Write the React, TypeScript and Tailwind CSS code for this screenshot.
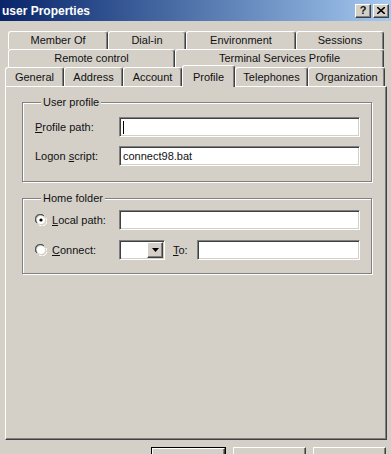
import React from 'react'

const raised =
    'border border-t-white border-l-white border-r-[#404040] border-b-[#404040] shadow-[inset_-1px_-1px_#808080]'
const sunken =
    'border border-t-[#808080] border-l-[#808080] border-r-white border-b-white shadow-[inset_1px_1px_#404040,inset_-1px_-1px_#d4d0c8] bg-white'
const tabBase =
    'flex items-center justify-center border-t border-l border-r border-t-white border-l-white border-r-[#404040] rounded-t-[3px] shadow-[inset_-1px_0_#808080]'

function Tab({ label, w }: { label: string; w: string }) {
    return <div className={`${tabBase} ${w} h-full`}>{label}</div>
}

function Radio({ checked }: { checked?: boolean }) {
    return (
        <svg width="12" height="12" viewBox="0 0 12 12" className="shrink-0">
            <path d="M1 8A5 5 0 0 1 8 1" stroke="#808080" fill="none" strokeWidth="1" />
            <path d="M2 9A4 4 0 0 1 9 2" stroke="#404040" fill="none" strokeWidth="1" />
            <circle cx="6" cy="6" r="4" fill="white" />
            <path d="M11 4A5 5 0 0 1 4 11" stroke="white" fill="none" strokeWidth="1" />
            {checked && <circle cx="6" cy="6" r="1.6" fill="black" />}
        </svg>
    )
}

export default function App() {
    return (
        <div
            className="w-[391px] h-[454px] overflow-hidden bg-[#d4d0c8] text-[11px] text-[#111] flex flex-col"
            style={{ fontFamily: '"Liberation Sans", Arial, sans-serif' }}
        >
            {/* Title bar */}
            <div className="h-[21px] shrink-0 flex items-center justify-between pl-[2px] pr-[2px] bg-gradient-to-r from-[#0a246a] to-[#a6caf0]">
                <span className="text-white font-bold text-[12px]">user Properties</span>
                <div className="flex gap-[2px]">
                    <div className={`${raised} bg-[#d4d0c8] w-[16px] h-[14px] flex items-center justify-center font-bold text-[11px] leading-none`}>
                        ?
                    </div>
                    <div className={`${raised} bg-[#d4d0c8] w-[16px] h-[14px] flex items-center justify-center`}>
                        <svg width="8" height="7" viewBox="0 0 8 7">
                            <path d="M0 0L8 7M8 0L0 7" stroke="black" strokeWidth="1.6" />
                        </svg>
                    </div>
                </div>
            </div>

            {/* Tabs */}
            <div className="mt-[10px] flex flex-col">
                <div className="flex h-[18px] pl-[8px]">
                    <Tab label="Member Of" w="w-[100px]" />
                    <Tab label="Dial-in" w="w-[78px]" />
                    <Tab label="Environment" w="w-[110px]" />
                    <Tab label="Sessions" w="w-[88px]" />
                </div>
                <div className="flex h-[18px] pl-[8px]">
                    <Tab label="Remote control" w="w-[167px]" />
                    <Tab label="Terminal Services Profile" w="w-[209px]" />
                </div>
                <div className="flex h-[19px] pl-[5px] items-end">
                    <Tab label="General" w="w-[59px]" />
                    <Tab label="Address" w="w-[59px]" />
                    <Tab label="Account" w="w-[59px]" />
                    <div className="relative z-10 h-[22px] mb-[-1px] w-[53px] flex items-start pt-[3px] justify-center border-t border-l border-r border-t-white border-l-white border-r-[#404040] rounded-t-[3px] shadow-[inset_-1px_0_#808080] bg-[#d4d0c8]">
                        Profile
                    </div>
                    <Tab label="Telephones" w="w-[73px]" />
                    <Tab label="Organization" w="w-[77px]" />
                </div>
            </div>

            {/* Panel */}
            <div className={`${raised} ml-[5px] w-[382px] h-[354px] shrink-0 pt-[9px] px-[16px]`}>
                <fieldset className="border border-[#808080] shadow-[1px_1px_0_white,inset_1px_1px_0_white] pl-[12px] pr-[11px] pt-[8px] pb-[15px]">
                    <legend className="ml-[6px] px-[2px] bg-[#d4d0c8] leading-[13px]">User profile</legend>
                    <div className="flex items-center h-[20px]">
                        <span className="w-[84px]">
                            <u>P</u>rofile path:
                        </span>
                        <div className={`${sunken} w-[241px] h-[20px] flex items-center pl-[3px]`}>
                            <div className="w-px h-[13px] bg-black" />
                        </div>
                    </div>
                    <div className="flex items-center h-[20px] mt-[9px]">
                        <span className="w-[84px]">
                            Logon <u>s</u>cript:
                        </span>
                        <div className={`${sunken} w-[241px] h-[20px] flex items-center pl-[3px]`}>connect98.bat</div>
                    </div>
                </fieldset>

                <fieldset className="mt-[10px] border border-[#808080] shadow-[1px_1px_0_white,inset_1px_1px_0_white] pl-[12px] pr-[11px] pt-[5px] pb-[13px]">
                    <legend className="ml-[6px] px-[2px] bg-[#d4d0c8] leading-[13px]">Home folder</legend>
                    <div className="flex items-center h-[20px]">
                        <div className="w-[84px] flex items-center gap-[5px]">
                            <Radio checked />
                            <span>
                                <u>L</u>ocal path:
                            </span>
                        </div>
                        <div className={`${sunken} w-[241px] h-[20px]`} />
                    </div>
                    <div className="flex items-center h-[20px] mt-[10px]">
                        <div className="w-[84px] flex items-center gap-[5px]">
                            <Radio />
                            <span>
                                <u>C</u>onnect:
                            </span>
                        </div>
                        <div className={`${sunken} w-[46px] h-[20px] flex justify-end p-[1px]`}>
                            <div className={`${raised} bg-[#d4d0c8] w-[16px] h-full flex items-center justify-center`}>
                                <svg width="7" height="4" viewBox="0 0 7 4">
                                    <path d="M0 0H7L3.5 4Z" fill="black" />
                                </svg>
                            </div>
                        </div>
                        <span className="ml-[8px] w-[24px]">
                            <u>T</u>o:
                        </span>
                        <div className={`${sunken} w-[163px] h-[20px]`} />
                    </div>
                </fieldset>
            </div>

            {/* Buttons */}
            <div className="flex justify-end gap-[7px] pr-[5px] mt-[7px]">
                <div className="w-[75px] h-[23px] border border-black">
                    <div className={`${raised} bg-[#d4d0c8] h-full flex items-center justify-center`}>OK</div>
                </div>
                <div className={`${raised} bg-[#d4d0c8] w-[73px] h-[23px] flex items-center justify-center`}>Cancel</div>
                <div className={`${raised} bg-[#d4d0c8] w-[73px] h-[23px] flex items-center justify-center text-[#808080]`}>
                    Apply
                </div>
            </div>
        </div>
    )
}
